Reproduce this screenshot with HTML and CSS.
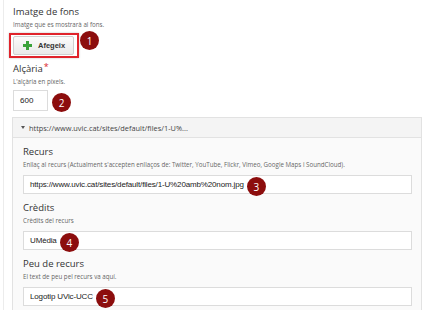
FILE: index.html
```html
<!DOCTYPE html>
<html lang="ca">
<head>
  <meta charset="UTF-8">
  <title>Imatge de fons</title>
  <link rel="stylesheet" href="styles.css">
</head>
<body>
<div class="page">
  <div class="field">
    <div class="label">Imatge de fons</div>
    <div class="desc">Imatge que es mostrarà al fons.</div>
    <div class="row">
      <div class="mark">
        <button class="btn"><span class="plus"></span>Afegeix</button>
      </div>
      <span class="num num-1">1</span>
    </div>
  </div>

  <div class="field">
    <div class="label">Alçària<span class="req">*</span></div>
    <div class="desc">L'alçària en píxels.</div>
    <div class="row">
      <div class="input small">600</div>
      <span class="num num-2">2</span>
    </div>
  </div>

  <div class="panel">
    <div class="panel-head"><span class="arrow"></span>https://www.uvic.cat/sites/default/files/1-U%...</div>
    <div class="panel-body">
      <div class="sub">
        <div class="label">Recurs</div>
        <div class="desc">Enllaç al recurs (Actualment s'accepten enllaços de: Twitter, YouTube, Flickr, Vimeo, Google Maps i SoundCloud).</div>
        <div class="input wide">https://www.uvic.cat/sites/default/files/1-U%20amb%20nom.jpg<span class="num">3</span></div>
      </div>
      <div class="sub">
        <div class="label">Crèdits</div>
        <div class="desc">Crèdits del recurs</div>
        <div class="input wide">UMèdia<span class="num">4</span></div>
      </div>
      <div class="sub">
        <div class="label">Peu de recurs</div>
        <div class="desc">El text de peu pel recurs va aquí.</div>
        <div class="input wide">Logotip UVic-UCC<span class="num">5</span></div>
      </div>
    </div>
  </div>
</div>
</body>
</html>
```

FILE: styles.css
```css
* {
  margin: 0;
  padding: 0;
  box-sizing: border-box;
}

body {
  background: #fff;
  font-family: "Open Sans", "Liberation Sans", sans-serif;
  color: #333;
}

.page {
  margin-left: 3px;
  border-left: 1px solid #ececec;
  padding: 6px 0 0 9px;
  height: 310px;
  overflow: hidden;
}

.label {
  font-size: 9.5px;
  line-height: 12px;
  color: #333;
}

.req {
  color: #d9262a;
  font-size: 9px;
  line-height: 8px;
  vertical-align: top;
  margin-left: 1px;
}

.desc {
  font-size: 6.2px;
  line-height: 10px;
  color: #666;
  margin-top: 2px;
  white-space: nowrap;
}

.row {
  display: flex;
  align-items: flex-start;
}

.field {
  margin-bottom: 5px;
}

.mark {
  margin: 3px 0 0 -4px;
  border: 2px solid #e0232b;
  padding: 1px 3px 1px 2px;
  box-shadow: 0 0 2px rgba(0, 0, 0, .25);
}

.btn {
  display: flex;
  align-items: center;
  width: 61px;
  height: 19px;
  padding-left: 9px;
  border: 1px solid #cfcfcf;
  border-radius: 2px;
  background: linear-gradient(#fbfbfb, #e9e9e9);
  font-family: "Liberation Sans", Arial, sans-serif;
  font-size: 7.5px;
  font-weight: bold;
  color: #333;
}

.plus {
  position: relative;
  width: 9px;
  height: 9px;
  margin-right: 6px;
}

.plus::before,
.plus::after {
  content: "";
  position: absolute;
  background: #3aa23a;
}

.plus::before {
  left: 3px;
  top: 0;
  width: 3px;
  height: 9px;
}

.plus::after {
  left: 0;
  top: 3px;
  width: 9px;
  height: 3px;
}

.num {
  display: inline-flex;
  align-items: center;
  justify-content: center;
  flex: none;
  width: 19px;
  height: 19px;
  border-radius: 50%;
  background: #8c0d0d;
  color: #fff;
  font-family: "Open Sans", sans-serif;
  font-size: 10px;
  line-height: 1;
}

.num-1 {
  margin: 1px 0 0 1px;
}

.num-2 {
  margin: 6px 0 0 4px;
}

.input {
  display: flex;
  align-items: center;
  padding-left: 6px;
  border: 1px solid #dcdcdc;
  background: #fff;
  font-family: "Liberation Sans", Arial, sans-serif;
  font-size: 8px;
  color: #222;
}

.input.small {
  width: 35px;
  height: 21px;
  margin-top: 3px;
}

.input .num {
  margin: 4px 0 0 3px;
}

.panel {
  margin: 3px 0 0 -1px;
  width: 410px;
  border: 1px solid #e2e2e2;
}

.panel-head {
  height: 20px;
  display: flex;
  align-items: center;
  padding-left: 8px;
  background: #f4f4f4;
  border-bottom: 1px solid #e2e2e2;
  font-size: 7.4px;
  color: #444;
}

.arrow {
  width: 0;
  height: 0;
  border-left: 2.5px solid transparent;
  border-right: 2.5px solid transparent;
  border-top: 3px solid #555;
  margin-right: 4px;
}

.panel-body {
  background: #fafafa;
  padding: 8px 9px 0 10px;
  height: 200px;
}

.sub {
  margin-bottom: 8px;
}

.input.wide {
  width: 389px;
  height: 19px;
  margin-top: 5px;
  letter-spacing: -0.15px;
}
```
